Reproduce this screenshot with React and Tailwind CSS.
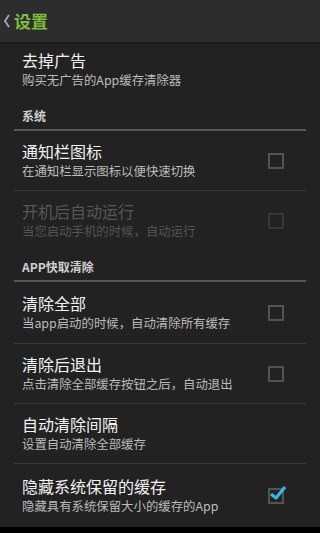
import React from 'react';

const font = { fontFamily: '"Noto Sans CJK SC", "Noto Sans", sans-serif' };

const CheckBox = ({ checked, disabled }) => (
  <div className="relative w-[16px] h-[16px] mr-[22px] shrink-0">
    <div
      className={
        'absolute inset-0 border-2 ' +
        (disabled ? 'border-[#373737]' : 'border-[#535353]')
      }
    />
    {checked && (
      <svg className="absolute left-[1px] top-[-3px]" width="18" height="16" viewBox="0 0 18 16">
        <path d="M2 9 L7 13 L16 2" fill="none" stroke="#33b5e5" strokeWidth="3.2" strokeLinejoin="round" />
      </svg>
    )}
  </div>
);

const Row = ({ title, summary, checkbox, checked, disabled, divider = true, className = '' }) => (
  <div className={'mx-[14px] flex items-center ' + (divider ? 'border-b border-[#393939] ' : '') + className}>
    <div className="flex-1 pl-[8px]">
      <div className={'text-[16px] leading-[20px] ' + (disabled ? 'text-[#575757]' : 'text-[#f2f2f2]')}>{title}</div>
      <div className={'text-[12.4px] leading-[20px] ' + (disabled ? 'text-[#545454]' : 'text-[#bcbcbc]')}>{summary}</div>
    </div>
    {checkbox && <CheckBox checked={checked} disabled={disabled} />}
  </div>
);

const Header = ({ label }) => (
  <div className="mx-[14px] h-[31px] border-b-2 border-[#575757] flex items-center pl-[8px]">
    <span className="text-[12px] font-bold text-[#d0d0d0] leading-[16px] mt-[3px]">{label}</span>
  </div>
);

export default function App() {
  return (
    <div className="w-[320px] h-[533px] bg-[#222222] flex flex-col overflow-hidden" style={font}>
      {/* action bar */}
      <div className="h-[44px] bg-[#2d2d2d] border-b-2 border-[#1b1b1b] flex items-center shrink-0">
        <svg className="ml-[3px]" width="8" height="14" viewBox="0 0 8 14">
          <path d="M6 1 L2 7 L6 13" fill="none" stroke="#a8a8a8" strokeWidth="1.8" />
        </svg>
        <span className="ml-[3px] text-[17px] leading-[20px] text-[#7fbb3e] font-bold">设置</span>
      </div>

      <Row className="h-[56px] pb-[4px]" title="去掉广告" summary="购买无广告的App缓存清除器" divider={false} />

      <Header label="系统" />
      <Row className="h-[60px]" title="通知栏图标" summary="在通知栏显示图标以便快速切换" checkbox />
      <Row className="h-[60px]" title="开机后自动运行" summary="当您启动手机的时候，自动运行" checkbox disabled divider={false} />

      <Header label="APP快取清除" />
      <Row className="h-[62px]" title="清除全部" summary="当app启动的时候，自动清除所有缓存" checkbox />
      <Row className="h-[60px]" title="清除后退出" summary="点击清除全部缓存按钮之后，自动退出" checkbox />
      <Row className="h-[60px]" title="自动清除间隔" summary="设置自动清除全部缓存" />
      <Row className="h-[63px]" title="隐藏系统保留的缓存" summary="隐藏具有系统保留大小的缓存的App" checkbox checked divider={false} />

      <div className="flex-1 bg-black" />
    </div>
  );
}
